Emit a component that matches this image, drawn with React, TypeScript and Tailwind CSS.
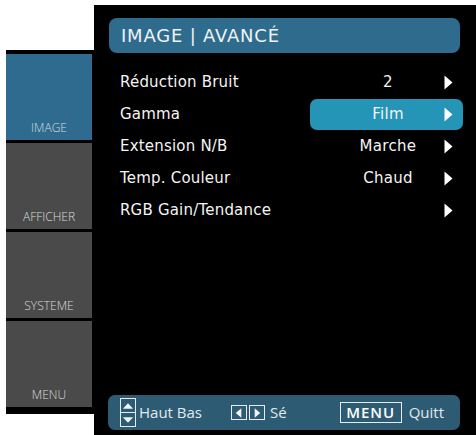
import React from 'react';

type Row = { label: string; value?: string; active?: boolean };

const rows: Row[] = [
  { label: 'Réduction Bruit', value: '2' },
  { label: 'Gamma', value: 'Film', active: true },
  { label: 'Extension N/B', value: 'Marche' },
  { label: 'Temp. Couleur', value: 'Chaud' },
  { label: 'RGB Gain/Tendance' },
];

const tabs = [
  { name: 'IMAGE', active: true },
  { name: 'AFFICHER' },
  { name: 'SYSTEME' },
  { name: 'MENU' },
];

function Arrow() {
  return (
    <svg width="9" height="15" viewBox="0 0 9 15" className="block">
      <path d="M0.5 0.5 L8.5 7.5 L0.5 14.5 Z" fill="#ffffff" />
    </svg>
  );
}

function KeyBox({ dir }: { dir: 'up' | 'down' | 'left' | 'right' }) {
  const d = {
    up: 'M2 10 L7.5 4 L13 10 Z',
    down: 'M2 4 L7.5 10 L13 4 Z',
    left: 'M10 2 L4 7 L10 12 Z',
    right: 'M5 2 L11 7 L5 12 Z',
  }[dir];
  return (
    <div className="flex h-[15px] w-[16px] items-center justify-center border border-[#e6ecef]">
      <svg width="15" height="14" viewBox="0 0 15 14" className="block">
        <path d={d} fill="#f2f5f7" />
      </svg>
    </div>
  );
}

export default function App() {
  return (
    <div className="flex h-[435px] w-[476px] items-start overflow-hidden bg-white">
      <aside className="ml-[6px] mt-[50px] flex w-[88px] flex-col gap-[3px] bg-black pb-[7px] pr-[2px] pt-[4px]">
        {tabs.map((t) => (
          <div
            key={t.name}
            className={
              'flex h-[86px] items-end justify-center pb-[3px] text-[12px] ' +
              (t.active ? 'bg-[#2e6b8e] text-[#cfdbe3]' : 'bg-[#4a4a4a] text-[#dadada]')
            }
            style={{ fontFamily: '"Open Sans", "Liberation Sans", sans-serif', fontWeight: 300 }}
          >
            {t.name}
          </div>
        ))}
      </aside>

      <main
        className="mt-[5px] flex h-[430px] flex-1 flex-col bg-black pl-[15px] pr-[13px] pt-[13px] pb-[5px] text-white"
        style={{ fontFamily: '"DejaVu Sans", Verdana, sans-serif' }}
      >
        <div className="mr-[3px] flex h-[35px] items-center rounded-[8px] bg-[#2f6b8c] pl-[12px] text-[18px] tracking-[0.8px] text-[#eef3f6]">
          IMAGE | AVANCÉ
        </div>

        <div className="mt-[13px] flex flex-col">
          {rows.map((r) => (
            <div key={r.label} className="flex h-[32px] items-center text-[15px]">
              <div className="flex-1 pl-[11px] tracking-[0.2px] text-[#f4f4f4]">{r.label}</div>
              <div
                className={
                  'flex h-[31px] w-[153px] items-center rounded-[7px] pl-[38px] ' +
                  (r.active ? 'bg-[#2595b7]' : '')
                }
              >
                <span className="w-[80px] text-center tracking-[0.3px] text-[#f4f4f4]">{r.value ?? ''}</span>
                <span className="ml-[16px]">
                  <Arrow />
                </span>
              </div>
            </div>
          ))}
        </div>

        <footer
          className="mt-auto -ml-[1px] mr-[3px] flex h-[35px] items-center rounded-[7px] bg-[#2c5b73] pl-[12px] text-[15px] text-[#e4eaee]"
          style={{ fontFamily: '"Open Sans", "Liberation Sans", sans-serif' }}
        >
          <div className="flex flex-col">
            <KeyBox dir="up" />
            <div className="-mt-[1px]">
              <KeyBox dir="down" />
            </div>
          </div>
          <span className="ml-[3px]">Haut Bas</span>
          <div className="ml-[29px] flex gap-[2px]">
            <KeyBox dir="left" />
            <KeyBox dir="right" />
          </div>
          <span className="ml-[5px]">Sé</span>
          <div className="ml-[53px] flex h-[21px] w-[62px] items-center justify-center border border-[#e6ecef] text-[15px] font-semibold tracking-[1px] text-white">
            MENU
          </div>
          <span className="ml-[7px]">Quitt</span>
        </footer>
      </main>
    </div>
  );
}
